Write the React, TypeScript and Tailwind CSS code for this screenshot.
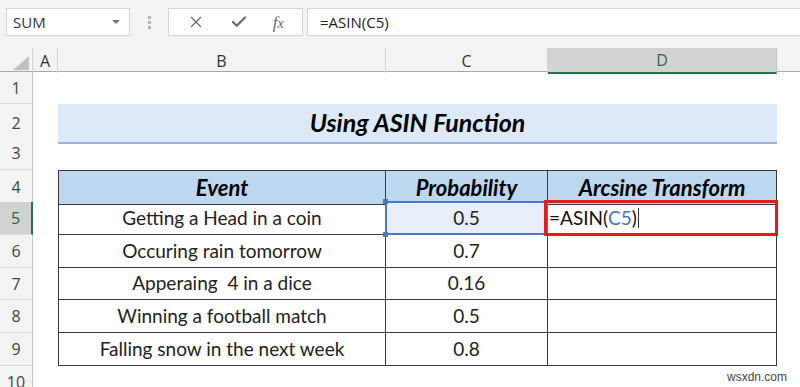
import { Check, X } from "lucide-react";

const cell = "font-['Lato','Liberation_Sans',sans-serif]";
const ui = "font-['Open_Sans','Liberation_Sans',sans-serif]";

const rowHeights = [32, 33, 33, 32, 33, 33, 32, 33, 33, 33];

const data = [
  { event: "Getting a Head in a coin", p: "0.5" },
  { event: "Occuring rain tomorrow", p: "0.7" },
  { event: "Apperaing  4 in a dice", p: "0.16" },
  { event: "Winning a football match", p: "0.5" },
  { event: "Falling snow in the next week", p: "0.8" },
];

const grid = "grid grid-cols-[33px_25px_328px_162px_229px_1fr]";

function RowHead({ n, active }: { n: number; active?: boolean }) {
  return (
    <div
      className={`flex items-center justify-center text-[16px] ${ui} ${
        active
          ? "bg-[#d2d2d2] text-[#1e6b41] border-r-2 border-r-[#217346]"
          : "bg-[#f3f3f3] text-[#444] border-r border-r-[#c8c8c8]"
      } border-b border-b-[#dadada]`}
    >
      {n}
    </div>
  );
}

export default function App() {
  return (
    <div className="relative w-[800px] h-[387px] overflow-hidden bg-white">
      {/* formula bar */}
      <div className={`h-[48px] bg-[#f3f3f3] flex items-start pt-[8px] ${ui}`}>
        <div className="ml-[6px] w-[124px] h-[28px] bg-white border border-[#d6d6d6] flex items-center justify-between pl-[6px] pr-[9px]">
          <span className="text-[15px] text-[#333]">SUM</span>
          <span className="w-0 h-0 border-l-[4px] border-r-[4px] border-t-[4px] border-l-transparent border-r-transparent border-t-[#777]" />
        </div>
        <div className="w-[38px] h-[28px] flex flex-col items-center justify-center gap-[2px]">
          <span className="w-[3px] h-[3px] bg-[#b8b8b8]" />
          <span className="w-[3px] h-[3px] bg-[#b8b8b8]" />
          <span className="w-[3px] h-[3px] bg-[#b8b8b8]" />
        </div>
        <div className="w-[135px] h-[28px] bg-white border border-[#d6d6d6] flex items-center justify-around px-[6px]">
          <X size={18} strokeWidth={1.6} className="text-[#6a6a6a]" />
          <Check size={18} strokeWidth={3} className="text-[#6a6a6a]" />
          <span className="font-['Liberation_Serif',serif] italic text-[17px] text-[#6a6a6a] leading-none">
            f<span className="text-[14px]">x</span>
          </span>
        </div>
        <div className="ml-[4px] flex-1 h-[28px] bg-white border border-[#d6d6d6] border-r-0 flex items-center pl-[12px]">
          <span className="text-[15px] text-[#222]">=ASIN(C5)</span>
        </div>
      </div>

      {/* column headers */}
      <div className={`${grid} h-[24px] bg-[#f3f3f3] border-b border-b-[#a8a8a8] ${ui} text-[16px] text-[#333]`}>
        <div className="relative border-r border-r-[#d4d4d4]">
          <svg className="absolute right-[3px] bottom-[3px]" width="16" height="14" viewBox="0 0 16 14">
            <polygon points="16,0 16,14 0,14" fill="#c0c0c0" />
          </svg>
        </div>
        <div className="flex items-center justify-center border-r border-r-[#d4d4d4]">A</div>
        <div className="flex items-center justify-center border-r border-r-[#d4d4d4]">B</div>
        <div className="flex items-center justify-center border-r border-r-[#d4d4d4]">C</div>
        <div className="flex items-center justify-center bg-[#d3d3d3] text-[#2f6b4a] border-b-2 border-b-[#217346] border-r border-r-[#c4c4c4] -mb-px">
          D
        </div>
        <div />
      </div>

      {/* rows */}
      {rowHeights.map((h, i) => {
        const r = i + 1;
        const style = { height: h };
        if (r === 2) {
          return (
            <div key={r} className={grid} style={style}>
              <RowHead n={r} />
              <div />
              <div className="col-span-3 bg-[#dde9f6] border-b-2 border-b-[#9cb4dc] flex items-center justify-center">
                <span className={`${cell} font-bold italic text-[25px] text-black`}>Using ASIN Function</span>
              </div>
              <div />
            </div>
          );
        }
        if (r === 4) {
          return (
            <div key={r} className={`${grid} ${cell}`} style={style}>
              <RowHead n={r} />
              <div />
              <div className="bg-[#bdd7ee] border border-[#3a3a3a] flex items-center justify-center font-bold italic text-[22px] text-black">
                Event
              </div>
              <div className="bg-[#bdd7ee] border-y border-r border-[#3a3a3a] flex items-center justify-center font-bold italic text-[22px] text-black">
                Probability
              </div>
              <div className="bg-[#bdd7ee] border-y border-r border-[#3a3a3a] flex items-center justify-center font-bold italic text-[22px] text-black">
                Arcsine Transform
              </div>
              <div />
            </div>
          );
        }
        if (r >= 5 && r <= 9) {
          const d = data[r - 5];
          const sel = r === 5;
          return (
            <div key={r} className={`${grid} ${cell} text-[19px] text-[#222]`} style={style}>
              <RowHead n={r} active={sel} />
              <div />
              <div className="border-x border-b border-[#3a3a3a] flex items-center justify-center whitespace-pre">
                {d.event}
              </div>
              <div
                className={`relative border-r border-b border-[#3a3a3a] flex items-center justify-center ${
                  sel ? "bg-[#e8eef8]" : ""
                }`}
              >
                {d.p}
                {sel && (
                  <>
                    <span className="absolute -left-px -top-px -right-px -bottom-px border-2 border-[#4a78c6]" />
                    <span className="absolute -left-[3px] -top-[3px] w-[5px] h-[5px] bg-[#4a78c6]" />
                    <span className="absolute -left-[3px] -bottom-[3px] w-[5px] h-[5px] bg-[#4a78c6]" />
                  </>
                )}
              </div>
              <div className="relative border-r border-b border-[#3a3a3a] flex items-center pl-[1px]">
                {sel && (
                  <>
                    <span className="text-[#111]">=ASIN(</span>
                    <span className="text-[#4472c4]">C5</span>
                    <span className="text-[#111]">)</span>
                    <span className="ml-[1px] w-px h-[20px] bg-[#333]" />
                    <span className="absolute -left-[4px] -top-[2px] -right-[2px] -bottom-[2px] border-[3px] border-[#e31c1c]" />
                  </>
                )}
              </div>
              <div />
            </div>
          );
        }
        return (
          <div key={r} className={grid} style={style}>
            <RowHead n={r} />
            <div />
            <div />
            <div />
            <div />
            <div />
          </div>
        );
      })}

      <span className="absolute left-[727px] top-[368px] text-[12px] text-[#444] font-['Liberation_Sans',sans-serif]">
        wsxdn.com
      </span>
    </div>
  );
}
